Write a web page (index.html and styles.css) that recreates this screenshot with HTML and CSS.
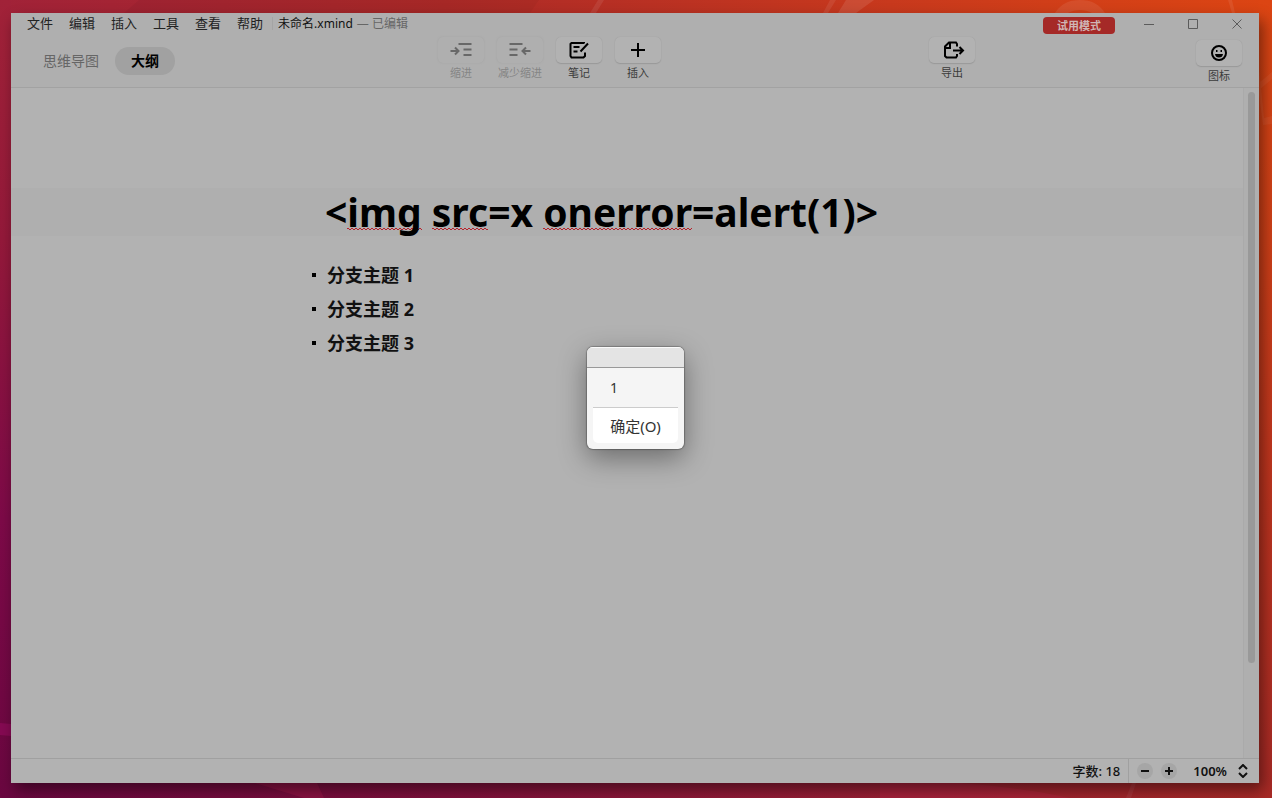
FILE: index.html
```html
<!DOCTYPE html>
<html lang="zh-CN">
<head>
<meta charset="utf-8">
<title>未命名.xmind</title>
<link rel="stylesheet" href="styles.css">
</head>
<body class="desktop">
<svg class="wallpaper" viewBox="0 0 1272 798" preserveAspectRatio="none" aria-hidden="true">
  <path d="M139 0h400l-9 13H124z" fill="#000" opacity=".04"/>
  <path d="M604 0h-6l-8 13h6zM836 0h-6l-7 13h5z" fill="#fff" opacity=".08"/>
  <path d="M846 0h28l-18 13h-18z" fill="#fff" opacity=".1"/>
  <path d="M1055 13c6-9 13-13 25-13s19 4 25 13h-13c-7-4-17-4-24 0z" fill="#fff" opacity=".08"/>
  <path d="M1228 0h4l3 13h-3z" fill="#fff" opacity=".08"/>
  <path d="M1259 83l13-11v7l-13 11zM1259 68l5 50 8-2v8l-9 1-4-30z" fill="#fff" opacity=".05"/>
  <path d="M0 723l11 1v12l-11-1z" fill="#850a52"/>
  <path d="M255 783h62l7 15h-20zM880 783h80c40 3 80 8 110 15H880z" fill="#d02858" opacity=".2"/>
  <path d="M1132 783h4l-5 15h-5z" fill="#fff" opacity=".06"/>
</svg>
<div class="window">
  <header class="top">
    <div class="titlebar">
      <nav class="menus">
        <button>文件</button><button>编辑</button><button>插入</button><button>工具</button><button>查看</button><button>帮助</button>
      </nav>
      <div class="doc"><span>未命名.xmind</span><span class="edited">— 已编辑</span></div>
      <button class="trial">试用模式</button>
      <div class="controls">
        <button aria-label="最小化"><svg width="10" height="10" viewBox="0 0 10 10"><path d="M0 5.500h10"/></svg></button>
        <button aria-label="最大化"><svg width="10" height="10" viewBox="0 0 10 10"><path d="M.5.5h9v9h-9z"/></svg></button>
        <button aria-label="关闭"><svg width="10" height="10" viewBox="0 0 10 10"><path d="M.5.500l9 9M9.500.5l-9 9"/></svg></button>
      </div>
    </div>
    <div class="toolbar">
      <div class="views"><button class="view">思维导图</button><button class="view active">大纲</button></div>
      <div class="tools">
        <button class="tool" disabled><span class="face"><svg width="22" height="16" viewBox="0 0 22 16"><path d="M.5 9H8M5 5.500L8.500 9 5 12.500M8.500 2h13M13.500 7.500h8M13.500 13h8"/></svg></span>缩进</button>
        <button class="tool" disabled><span class="face"><svg width="22" height="16" viewBox="0 0 22 16"><path d="M.5 2h13M.5 7.500h8M.5 13h8M21.500 9H14M17 5.500L13.500 9l3.500 3.500"/></svg></span>减少缩进</button>
        <button class="tool"><span class="face"><svg width="20" height="18" viewBox="0 0 20 18"><path d="M15 2.500V2H2.500L1.500 3v12l1 1.500h12l1.500-1.500v-3.500M4.500 6h6M4.500 10.500h4M11.500 10.500l7.500-8"/></svg></span>笔记</button>
        <button class="tool"><span class="face"><svg width="16" height="16" viewBox="0 0 16 16"><path d="M8 1v14M1 8h14"/></svg></span>插入</button>
      </div>
      <button class="tool export"><span class="face"><svg width="26" height="18" viewBox="-5 0 26 18"><path d="M13 5.500V3l-1-1.500H5L1 5.500V15l1.500 1.500H12l1-1.500v-2M1 7h5V2M9 9.500h9.500M15.500 6l3.500 3.500-3.500 3.500"/></svg></span>导出</button>
      <button class="tool marker"><span class="face"><svg width="18" height="18" viewBox="0 0 18 18"><circle cx="9" cy="9" r="7"/><path class="solid" d="M5 10h8q-.5 3.500-4 3.500T5 10zM6 6h1.500v2H6zM10.500 6H12v2h-1.500z"/></svg></span>图标</button>
    </div>
  </header>
  <main class="editor">
    <section class="outline">
      <h1 class="title">&lt;<span class="typo">img</span> <span class="typo">src</span>=x <span class="typo">onerror</span>=alert(1)&gt;</h1>
      <ul class="topics"><li>分支主题 1</li><li>分支主题 2</li><li>分支主题 3</li></ul>
    </section>
    <div class="scroll"><div class="thumb"></div></div>
  </main>
  <footer class="status">
    <span class="count">字数: 18</span>
    <button class="zoom" aria-label="缩小"><svg width="16" height="16" viewBox="0 0 16 16"><path d="M4 8h8"/></svg></button>
    <button class="zoom" aria-label="放大"><svg width="16" height="16" viewBox="0 0 16 16"><path d="M4 8h8M8 4v8"/></svg></button>
    <button class="percent">100%<svg width="10" height="14" viewBox="0 0 10 14"><path d="M1 5l4-4 4 4M1 9l4 4 4-4"/></svg></button>
  </footer>
</div>
<div class="dialog" role="alertdialog" aria-describedby="message">
  <div class="dialog-bar"></div>
  <p class="message" id="message">1</p>
  <button class="ok">确定(O)</button>
</div>
</body>
</html>
```

FILE: styles.css
```css
* { box-sizing: border-box; }
button { font: inherit; color: inherit; background: none; border: 0; padding: 0; }
svg { display: block; fill: none; stroke: currentColor; }
.desktop {
  margin: 0; min-height: 100vh; padding: 13px 13px 15px 11px; display: flex;
  font-family: "Noto Sans", "Noto Sans CJK SC", sans-serif; font-size: 13px; color: #111;
  background:
    linear-gradient(#a12238, #94193a 30%, #7d0a48 65%, #6a0740 100%) left / 11px 100% no-repeat,
    linear-gradient(#dc4513, #d04018 30%, #c0351f 60%, #a82a26 100%) right / 13px 100% no-repeat,
    linear-gradient(90deg, #a12238, #ad2a28 35%, #c8391d 70%, #dc4513) top / 100% 13px no-repeat,
    linear-gradient(90deg, #6a0740, #7f103c 35%, #9b2034 70%, #a82a26) bottom / 100% 15px no-repeat;
}
.wallpaper { position: absolute; inset: 0; width: 100%; height: 100%; stroke: none; }
.window {
  position: relative; flex: 1; display: flex; flex-direction: column;
  background: #b2b2b2; box-shadow: 4px 7px 14px rgba(0, 0, 0, .45);
}
.top { background: #afafaf; border-bottom: 1px solid #a2a2a2; height: 75px; }
.titlebar { display: flex; height: 22px; line-height: 20px; padding-left: 16px; }
.menus { display: flex; gap: 16px; height: 20px; line-height: 18px; color: #222; }
.doc { display: flex; gap: 4px; margin: 4px 0 0 9px; padding-left: 5px; border-left: 1px solid #a4a4a4; height: 13px; line-height: 14px; font-size: 12px; }
.edited { color: #666; }
.trial { margin: 4px 27px 0 auto; width: 72px; height: 17px; line-height: 16px; border-radius: 4px; background: #a52927; color: #d0b5b4; font-size: 11px; font-weight: 700; }
.controls { display: flex; gap: 30px; padding: 6px 15px 0 0; color: #5b5b5b; }
.controls button { width: 14px; height: 10px; display: grid; place-items: center; }
.toolbar { display: flex; align-items: flex-start; }
.views { display: flex; gap: 16px; margin: 12px auto 0 32px; font-size: 14px; line-height: 28px; }
.view { color: #666; }
.active { width: 60px; height: 28px; border-radius: 14px; background: #a1a1a1; color: #000; font-weight: 700; }
.tools { display: flex; gap: 11px; margin-right: 266px; }
.tool { width: 48px; margin-top: 2px; font-size: 11px; line-height: 16px; color: #3b3b3b; white-space: nowrap; display: flex; flex-direction: column; align-items: center; }
.face { width: 46px; height: 26px; margin-bottom: 2px; display: grid; place-items: center; border-radius: 5px; background: #b2b2b2; color: #000; box-shadow: 0 1px 1px #999, 0 0 1px #999; }
.tool svg { stroke-width: 2; }
.tool .solid { fill: currentColor; stroke: none; }
.tool:disabled { color: #858585; }
.tool:disabled .face { color: #686868; background: none; box-shadow: 0 0 2px #a2a2a2; }
.export { margin-right: 219px; }
.marker { margin: 5px 16px 0 0; }
.editor { flex: 1; display: flex; }
.outline { flex: 1; padding-top: 100px; }
.title { margin: 0; height: 48px; line-height: 48px; padding-left: 314px; background: #afafaf; font-size: 39px; font-weight: 700; color: #000; white-space: nowrap; }
.typo {
  background:
    linear-gradient(45deg, transparent 40%, #b81f2a 40% 60%, transparent 60%) 0 calc(100% - 8px) / 4px 2px repeat-x,
    linear-gradient(135deg, transparent 40%, #b81f2a 40% 60%, transparent 60%) 2px calc(100% - 8px) / 4px 2px repeat-x;
}
.topics { list-style: none; margin: 22px 0 0; padding: 0 0 0 301px; font-size: 18px; font-weight: 700; line-height: 34px; }
.topics li { display: flex; align-items: center; gap: 11px; }
.topics li::before { content: ""; width: 4px; height: 4px; background: #000; }
.scroll { width: 16px; background: #afafaf; border-left: 1px solid #aaa; padding: 4px 4px 95px; display: flex; }
.thumb { width: 7px; border-radius: 4px; background: #999; }
.status { height: 25px; border-top: 1px solid #a0a0a0; display: flex; align-items: center; justify-content: flex-end; padding-right: 11px; font-size: 12px; font-weight: 600; }
.count { border-right: 1px solid #a0a0a0; padding-right: 8px; margin-right: 8px; line-height: 24px; font-size: 13px; font-weight: 500; }
.zoom { width: 16px; height: 16px; border-radius: 8px; background: #a6a6a6; margin-right: 8px; }
.status svg { stroke-width: 2; }
.percent { display: flex; align-items: center; gap: 11px; margin-left: 8px; font-size: 13px; }
.dialog {
  position: absolute; left: calc(50% - 49px); top: calc(50% - 52px); width: 97px; height: 102px;
  border-radius: 6px; overflow: hidden; background: #f5f5f5; color: #333;
  box-shadow: 0 0 1px 1px rgba(0, 0, 0, .25), 0 9px 28px rgba(0, 0, 0, .4);
}
.dialog-bar { height: 21px; background: #e4e4e4; border-top: 1px solid #fafafa; border-bottom: 1px solid #999; }
.message { margin: 0; height: 39px; padding-left: 23px; line-height: 39px; font-size: 14px; }
.ok { display: block; width: 85px; height: 36px; margin: 0 6px; border-top: 1px solid #ccc; border-radius: 0 0 5px 5px; background: #fff; font-size: 15px; }
```
